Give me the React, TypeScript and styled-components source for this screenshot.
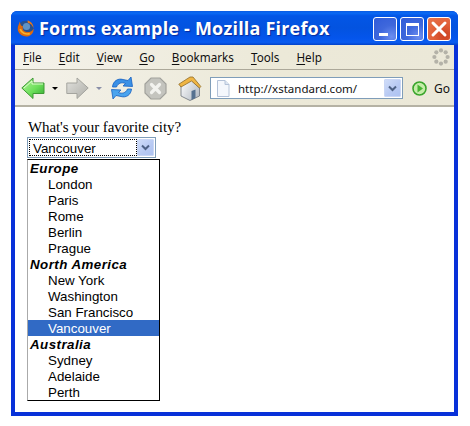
import React from "react";
import styled, { createGlobalStyle } from "styled-components";

const Global = createGlobalStyle`
  html, body { margin: 0; padding: 0; background: #fff; }
  body { width: 470px; height: 426px; overflow: hidden; }
`;

const Win = styled.div`
  margin: 11px 0 0 11px;
  width: 447px;
  height: 405px;
  box-sizing: border-box;
  display: flex;
  flex-direction: column;
  background: #0831d9;
  border-radius: 6px 6px 0 0;
  overflow: hidden;
`;
const TitleBar = styled.div`
  height: 34px;
  flex: none;
  display: flex;
  align-items: center;
  padding: 0 7px 0 6px;
  background: linear-gradient(180deg, #0a5ae0 0%, #0a6af5 6%, #0356e6 14%, #0353e0 50%, #0455ec 80%, #0a5cf0 92%, #0342c8 100%);
`;
const TitleText = styled.div`
  flex: 1;
  margin-left: 5px;
  font-family: "Open Sans", sans-serif;
  font-weight: 700;
  font-size: 18px;
  letter-spacing: 0.2px;
  color: #fff;
  text-shadow: 1px 1px 1px #0a2a9c;
  white-space: nowrap;
`;
const WinButtons = styled.div`
  display: flex;
  gap: 3px;
  padding-top: 1px;
`;
const WinBtn = styled.div<{ $close?: boolean }>`
  width: 24px;
  height: 24px;
  box-sizing: border-box;
  border: 1px solid #fff;
  border-radius: 3px;
  display: flex;
  align-items: center;
  justify-content: center;
  background: ${(p) =>
    p.$close
      ? "radial-gradient(circle at 75% 80%, #cc4020 0%, #e2613a 50%, #e8764f 100%)"
      : "radial-gradient(circle at 80% 85%, #6c8ef0 0%, #3f68dc 45%, #2f5bd8 100%)"};
`;
const Client = styled.div`
  flex: 1;
  margin: 0 4px 4px 4px;
  display: flex;
  flex-direction: column;
  background: #fff;
  min-height: 0;
`;
const MenuBar = styled.div`
  height: 25px;
  flex: none;
  box-sizing: border-box;
  display: flex;
  align-items: center;
  padding-left: 8px;
  gap: 17px;
  background: linear-gradient(90deg, #f4f2ea 0%, #ece9d8 60%, #ebe8d8 100%);
  border-bottom: 1px solid #aca899;
  font-family: "Noto Sans", sans-serif;
  font-size: 11.7px;
  color: #111;
  position: relative;
`;
const MenuItem = styled.span`
  & u { text-underline-offset: 2px; }
`;
const Throbber = styled.svg`
  position: absolute;
  right: 4px;
  top: 3px;
`;
const Toolbar = styled.div`
  height: 37px;
  flex: none;
  display: flex;
  align-items: center;
  padding: 1px 0 0 6px;
  background: linear-gradient(90deg, #f3f1e9 0%, #ece9d8 60%, #ebe8d8 100%);
  border-bottom: 2px solid #b5b2a4;
  box-sizing: border-box;
`;
const Slot = styled.span<{ $l?: number }>`
  display: inline-flex;
  margin-left: ${(p) => p.$l ?? 0}px;
`;
const Address = styled.div`
  margin-left: 8px;
  width: 193px;
  height: 22px;
  box-sizing: border-box;
  border: 1px solid #7f9db9;
  background: #fff;
  display: flex;
  align-items: center;
  padding: 0 1px 0 5px;
  font-family: "Noto Sans", sans-serif;
  font-size: 11.5px;
  color: #111;
`;
const AddrText = styled.span`
  flex: 1;
  margin-left: 8px;
  white-space: nowrap;
`;
const ComboBtn = styled.div<{ $h: number }>`
  width: 17px;
  height: ${(p) => p.$h}px;
  flex: none;
  border-radius: 1px;
  background: linear-gradient(135deg, #cfdcf8 0%, #b7c9f3 60%, #aec3f1 100%);
  border: 1px solid #c9d6f5;
  box-sizing: border-box;
  display: flex;
  align-items: center;
  justify-content: center;
`;
const GoLabel = styled.span`
  margin-left: 7px;
  font-family: "Noto Sans", sans-serif;
  font-size: 12px;
  color: #111;
`;
const Page = styled.div`
  flex: 1;
  padding: 11px 0 0 12px;
  min-height: 0;
`;
const Question = styled.div`
  padding-left: 1px;
  font-family: "Liberation Serif", serif;
  font-size: 15px;
  letter-spacing: -0.1px;
  line-height: 18px;
  color: #000;
`;
const Select = styled.div`
  width: 129px;
  height: 21px;
  margin-top: 1px;
  box-sizing: border-box;
  border: 1px solid #7f9db9;
  background: #fff;
  display: flex;
  align-items: center;
  padding: 1px;
`;
const SelectValue = styled.div`
  flex: 1;
  height: 17px;
  box-sizing: border-box;
  border: 1px dotted #000;
  font-family: "Liberation Sans", sans-serif;
  font-size: 13.33px;
  line-height: 17px;
  padding-left: 3px;
`;
const List = styled.div`
  width: 133px;
  margin-top: 1px;
  box-sizing: border-box;
  border-style: solid;
  border-width: 1px;
  border-color: #000 #000 #000 #aaa;
  background: #fff;
  font-family: "Liberation Sans", sans-serif;
  font-size: 13.33px;
`;
const Group = styled.div`
  height: 16px;
  line-height: 18px;
  font-weight: 700;
  font-style: italic;
  letter-spacing: 0.45px;
  padding-left: 2px;
  color: #000;
`;
const Opt = styled.div<{ $sel?: boolean }>`
  height: 16px;
  line-height: 18px;
  padding-left: 20px;
  color: ${(p) => (p.$sel ? "#fff" : "#000")};
  background: ${(p) => (p.$sel ? "#316ac5" : "transparent")};
`;

const Chevron = () => (
  <svg width="9" height="7" viewBox="0 0 9 7">
    <path d="M1 1.5 L4.5 5 L8 1.5" fill="none" stroke="#4d6185" strokeWidth="2" />
  </svg>
);

const Fox = () => (
  <svg width="17" height="17" viewBox="0 0 17 17">
    <circle cx="8.5" cy="8.5" r="7.8" fill="#27508f" />
    <circle cx="9.5" cy="6.5" r="3.6" fill="#5f93c6" />
    <path d="M2.8 1.5 C1.8 5 0 7 1 10.8 C2.6 15.4 8 17.6 12.2 15.9 C15.4 14.6 17 11.6 16.5 8.4 C15.2 11.4 12.5 12.5 9.5 12 C6.5 11.5 5 9 6 6.2 C4.5 6.2 3.4 5.2 3.4 4 Z" fill="#dd6a10" />
    <path d="M3.2 9 C4.2 13 8.8 14.8 12.8 13.6" fill="none" stroke="#f5b32e" strokeWidth="1.7" />
    <path d="M10.5 0.6 C14 1.2 16.4 4.4 16.5 8 C15.4 5.4 13.5 3.4 10.8 2.8 Z" fill="#e8781a" />
  </svg>
);

const Back = () => (
  <svg width="24" height="23" viewBox="0 0 24 23">
    <defs>
      <linearGradient id="bk" x1="0" y1="0" x2="1" y2="1">
        <stop offset="0" stopColor="#b8f4a0" />
        <stop offset="0.55" stopColor="#6ee05c" />
        <stop offset="1" stopColor="#30a830" />
      </linearGradient>
    </defs>
    <path d="M0.8 11 L12 1 L12 6 L23 6 L23 16.5 L12 16.5 L12 21.5 Z" fill="url(#bk)" stroke="#3e9a34" strokeWidth="1" strokeLinejoin="round" />
    <path d="M3 11 L11 4 L11 7 L22 7" fill="none" stroke="#dcfccc" strokeWidth="1" />
  </svg>
);

const Forward = () => (
  <svg width="23" height="23" viewBox="0 0 23 23">
    <defs>
      <linearGradient id="fw" x1="0" y1="0" x2="1" y2="1">
        <stop offset="0" stopColor="#e2e2de" />
        <stop offset="1" stopColor="#aeaea8" />
      </linearGradient>
    </defs>
    <path d="M22.2 11 L11 1 L11 6 L0.8 6 L0.8 16.5 L11 16.5 L11 21.5 Z" fill="url(#fw)" stroke="#a4a49e" strokeWidth="1" strokeLinejoin="round" />
  </svg>
);

const Caret = ({ c }: { c: string }) => (
  <svg width="6" height="3" viewBox="0 0 6 3">
    <path d="M0 0 H6 L3 3 Z" fill={c} />
  </svg>
);

const Reload = () => (
  <svg width="24" height="24" viewBox="0 0 24 24">
    <path d="M2.5 11 C3 5 8 2 13 3.5 L18 4.5 L21 1 L22.5 10.5 L13 10 L15.5 7.5 C12 6 8 7 6.5 11 Z" fill="#3a90e6" stroke="#1660c0" strokeWidth="0.8" strokeLinejoin="round" />
    <path d="M21.5 13 C21 19 16 22 11 20.5 L6 19.5 L3 23 L1.5 13.5 L11 14 L8.5 16.5 C12 18 16 17 17.5 13 Z" fill="#4aa4ee" stroke="#1660c0" strokeWidth="0.8" strokeLinejoin="round" />
  </svg>
);

const Stop = () => (
  <svg width="23" height="23" viewBox="0 0 23 23">
    <path d="M7 1 H16 L22 7 V16 L16 22 H7 L1 16 V7 Z" fill="#c4c4be" stroke="#a2a29c" strokeWidth="1.2" />
    <path d="M7.5 7.5 L15.5 15.5 M15.5 7.5 L7.5 15.5" stroke="#f2f2ee" strokeWidth="3.2" strokeLinecap="round" />
  </svg>
);

const Home = () => (
  <svg width="24" height="25" viewBox="0 0 24 25">
    <defs>
      <linearGradient id="hm" x1="0" y1="0" x2="1" y2="0.6">
        <stop offset="0" stopColor="#ffffff" />
        <stop offset="1" stopColor="#b9c0c8" />
      </linearGradient>
    </defs>
    <path d="M3 9 L13 4 L21.5 12 V20 L12 24.5 L3 20 Z" fill="url(#hm)" stroke="#6d747c" strokeWidth="0.8" strokeLinejoin="round" />
    <path d="M0.8 8.2 L12 1 L15 1 L22.8 10.5 L21.5 12 L13.5 5 L3 11 Z" fill="#efb544" stroke="#8f6c2a" strokeWidth="0.8" strokeLinejoin="round" />
    <path d="M13.5 15 L17.5 13.5 V22 L13.5 24 Z" fill="#55718f" />
  </svg>
);

const PageIcon = () => (
  <svg width="14" height="17" viewBox="0 0 14 17">
    <path d="M1.5 0.5 H9 L13 4.5 V16.5 H1.5 Z" fill="#f4f7fc" stroke="#b4c2d8" />
    <path d="M9 0.5 V4.5 H13" fill="#dde6f2" stroke="#b4c2d8" />
  </svg>
);

const GoIcon = () => (
  <svg width="15" height="15" viewBox="0 0 15 15">
    <circle cx="7.5" cy="7.5" r="6.5" fill="#c4eca8" stroke="#3aa52c" strokeWidth="1.6" />
    <path d="M5.5 3.5 L11 7.5 L5.5 11.5 Z" fill="#46b432" />
  </svg>
);

const Spinner = () => (
  <Throbber width="18" height="18" viewBox="0 0 18 18">
    {[0, 45, 90, 135, 180, 225, 270, 315].map((a) => (
      <circle
        key={a}
        cx={9 + 6.6 * Math.cos((a * Math.PI) / 180)}
        cy={9 + 6.6 * Math.sin((a * Math.PI) / 180)}
        r="2.1"
        fill="#b4b2a8"
      />
    ))}
  </Throbber>
);

const groups: [string, string[]][] = [
  ["Europe", ["London", "Paris", "Rome", "Berlin", "Prague"]],
  ["North America", ["New York", "Washington", "San Francisco", "Vancouver"]],
  ["Australia", ["Sydney", "Adelaide", "Perth"]],
];

const menus: [string, string][] = [
  ["F", "ile"],
  ["E", "dit"],
  ["V", "iew"],
  ["G", "o"],
  ["B", "ookmarks"],
  ["T", "ools"],
  ["H", "elp"],
];

export default function App() {
  return (
    <>
      <Global />
      <Win>
        <TitleBar>
          <Fox />
          <TitleText>Forms example - Mozilla Firefox</TitleText>
          <WinButtons>
            <WinBtn>
              <svg width="20" height="20" viewBox="0 0 20 20">
                <rect x="4" y="14" width="9" height="3" fill="#fff" />
              </svg>
            </WinBtn>
            <WinBtn>
              <svg width="20" height="20" viewBox="0 0 20 20">
                <rect x="4.5" y="4.5" width="12" height="12" fill="none" stroke="#fff" />
                <rect x="4" y="4" width="13" height="3" fill="#fff" />
              </svg>
            </WinBtn>
            <WinBtn $close>
              <svg width="20" height="20" viewBox="0 0 20 20">
                <path d="M4 4 L16 16 M16 4 L4 16" stroke="#fff" strokeWidth="3" strokeLinecap="round" />
              </svg>
            </WinBtn>
          </WinButtons>
        </TitleBar>
        <Client>
          <MenuBar>
            {menus.map(([k, r]) => (
              <MenuItem key={k}>
                <u>{k}</u>
                {r}
              </MenuItem>
            ))}
            <Spinner />
          </MenuBar>
          <Toolbar>
            <Back />
            <Slot $l={7}><Caret c="#000" /></Slot>
            <Slot $l={8}><Forward /></Slot>
            <Slot $l={7}><Caret c="#8a8fa8" /></Slot>
            <Slot $l={8}><Reload /></Slot>
            <Slot $l={10}><Stop /></Slot>
            <Slot $l={11}><Home /></Slot>
            <Address>
              <PageIcon />
              <AddrText>http://xstandard.com/</AddrText>
              <ComboBtn $h={18}><Chevron /></ComboBtn>
            </Address>
            <Slot $l={9}><GoIcon /></Slot>
            <GoLabel>Go</GoLabel>
          </Toolbar>
          <Page>
            <Question>What's your favorite city?</Question>
            <Select>
              <SelectValue>Vancouver</SelectValue>
              <ComboBtn $h={17}><Chevron /></ComboBtn>
            </Select>
            <List>
              {groups.map(([g, items]) => (
                <React.Fragment key={g}>
                  <Group>{g}</Group>
                  {items.map((i) => (
                    <Opt key={i} $sel={i === "Vancouver"}>{i}</Opt>
                  ))}
                </React.Fragment>
              ))}
            </List>
          </Page>
        </Client>
      </Win>
    </>
  );
}
